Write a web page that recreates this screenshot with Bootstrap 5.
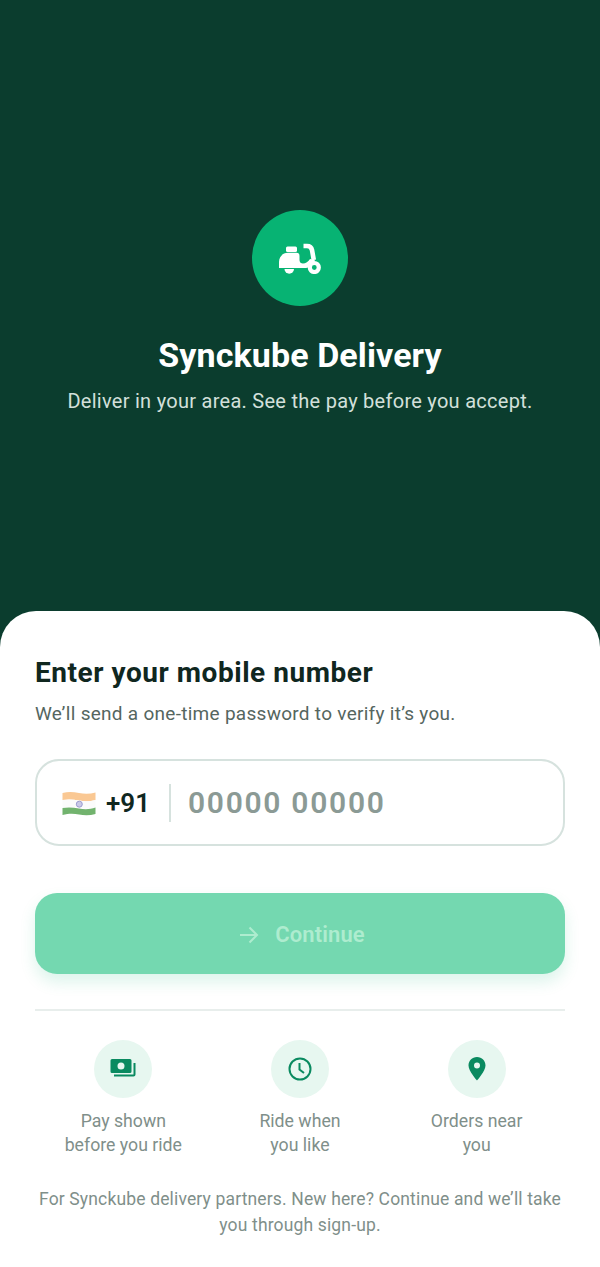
<!DOCTYPE html>
<html lang="en">
  <head>
    <meta charset="UTF-8" />
    <meta name="viewport" content="width=device-width, initial-scale=1.0" />
    <title>Synckube Delivery</title>
    <link href="https://cdn.jsdelivr.net/npm/bootstrap@5.3.0/dist/css/bootstrap.min.css" rel="stylesheet" />
    <style>
      html, body { height: 100%; }
      body { font-family: Roboto, "Liberation Sans", sans-serif; background: #0b3d2e; overflow: hidden; }
      .hero-panel { height: 611px; padding-top: 210px; background: #0b3d2e; }
      .logo-disc { width: 96px; height: 96px; background: #07b373; }
      .hero-title { font-size: 34px; line-height: 40px; font-weight: 700; color: #fff; margin: 29px 0 0; letter-spacing: 0.1px; }
      .hero-sub { font-size: 20px; line-height: 28px; color: #d3e0db; margin: 12px 0 0; letter-spacing: 0.27px; }
      .sheet { height: 656px; background: #fff; border-radius: 36px 36px 0 0; padding: 44px 35px 0; }
      .sheet-title { font-size: 28px; line-height: 36px; font-weight: 700; color: #10271f; margin: 0; letter-spacing: 0.54px; }
      .sheet-sub { font-size: 19px; line-height: 26px; color: #55665f; margin: 10px 0 0; letter-spacing: 0.28px; }
      .phone-box { height: 87px; margin-top: 32px; border: 2px solid #d6e2de; border-radius: 24px; padding: 0 24px; }
      .dial-code { font-size: 26px; font-weight: 600; color: #10271f; margin-left: 9px; padding-top: 1px; }
      .phone-split { width: 2px; height: 38px; background: #d6e2de; margin: 0 17px 0 19px; }
      .phone-hint { font-size: 30px; font-weight: 600; color: #8b9a95; letter-spacing: 1.7px; }
      .go-btn { height: 81px; margin-top: 47px; padding: 2px 0 0 4px; border: 0; border-radius: 22px; background: #74d8b0; color: #aeeccf; font-size: 22px; font-weight: 600; letter-spacing: 0.1px; box-shadow: 0 8px 16px rgba(7, 179, 115, 0.14); }
      .go-btn:disabled { background: #74d8b0; color: #aeeccf; opacity: 1; }
      .sheet-rule { height: 2px; margin-top: 35px; background: #e8eeec; }
      .perk-row { display: grid; grid-template-columns: repeat(3, 1fr); margin-top: 29px; }
      .perk-disc { width: 58px; height: 58px; background: #e7f7f0; }
      .perk-text { font-size: 17.7px; line-height: 24px; color: #7f8f8a; margin-top: 11px; }
      .sheet-note { font-size: 17.5px; line-height: 26px; color: #7f8f8a; margin-top: 29px; letter-spacing: 0.15px; }
    </style>
  </head>
  <body>
    <div class="hero-panel text-center">
      <div class="logo-disc rounded-circle d-flex align-items-center justify-content-center mx-auto">
        <svg width="44" height="32" viewBox="0 -1 44 32" fill="#fff">
          <rect x="8" y="3.500" width="11" height="5.500" rx="1.500" />
          <path d="M1 25V19C1 13.500 5 9.800 10 9.800H18.500C20.500 9.800 21.500 11 21.500 13V17C21.500 19.500 23 20.500 25 20.500 27.500 20.500 30.500 18.500 32 16L37 17C35 21 31.500 25 28 25Z" />
          <path d="M6.500 26h9.500a4.750 4.750 0 0 1-9.500 0z" />
          <path d="M25.500 3h3.500c3 0 4.500 1.500 5 4l1.800 10" fill="none" stroke="#fff" stroke-width="4.600" />
          <circle cx="36.300" cy="24.500" r="4.500" fill="none" stroke="#fff" stroke-width="4.200" />
        </svg>
      </div>
      <h1 class="hero-title">Synckube Delivery</h1>
      <p class="hero-sub">Deliver in your area. See the pay before you accept.</p>
    </div>
    <div class="sheet">
      <h2 class="sheet-title">Enter your mobile number</h2>
      <p class="sheet-sub">We’ll send a one-time password to verify it’s you.</p>
      <div class="phone-box d-flex align-items-center">
        <svg width="36" height="28" viewBox="0 0 36 28">
          <path d="M1.500 4c6-1.500 11-1 16.500 0s11 1 16.500-.5v7.500c-5.500 1.500-11 1.500-16.500.5S7.500 10 1.500 11z" fill="#fac893" />
          <path d="M1.500 11c6-1 11-.5 16.500.5s11 1 16.500-.5v7.500c-5.500 1.500-11 1.500-16.500.5s-10.500-1-16.500 0z" fill="#fbfbfb" />
          <path d="M1.500 19c6-1 11-.5 16.500.5s11 1 16.500-1V25c-5.500 1.500-11 1.500-16.500.5S7.500 24.500 1.500 26z" fill="#72b36e" />
          <circle cx="18.300" cy="15.200" r="3" fill="#c9c9e6" stroke="#9c9cd0" stroke-width="1" />
        </svg>
        <span class="dial-code">+91</span>
        <span class="phone-split"></span>
        <span class="phone-hint">00000 00000</span>
      </div>
      <button class="go-btn btn w-100 d-flex align-items-center justify-content-center gap-3" disabled>
        <svg width="20" height="20" viewBox="0 0 20 20" fill="none" stroke="#aeeccf" stroke-width="2">
          <path d="M1 10h17M10.500 2.500 18 10l-7.500 7.500" />
        </svg>
        Continue
      </button>
      <div class="sheet-rule"></div>
      <div class="perk-row text-center">
        <div>
          <div class="perk-disc rounded-circle d-flex align-items-center justify-content-center mx-auto">
            <svg width="28" height="24" viewBox="0 0 28 24">
              <path fill-rule="evenodd" fill="#0a8a60" d="M3 2h18a1.500 1.500 0 0 1 1.500 1.500v11A1.500 1.500 0 0 1 21 16H3a1.500 1.500 0 0 1-1.500-1.500v-11A1.500 1.500 0 0 1 3 2zm9 3.500a3.500 3.500 0 1 0 0 7 3.500 3.500 0 0 0 0-7z" />
              <path d="M25.500 6v11.500a1 1 0 0 1-1 1H5" fill="none" stroke="#0a8a60" stroke-width="2" />
            </svg>
          </div>
          <div class="perk-text">Pay shown<br />before you ride</div>
        </div>
        <div>
          <div class="perk-disc rounded-circle d-flex align-items-center justify-content-center mx-auto">
            <svg width="24" height="24" viewBox="0 0 24 24" fill="none" stroke="#0a8a60" stroke-width="2">
              <circle cx="12" cy="12" r="10.500" />
              <path d="M11.500 6v6.500l4.500 3.500" />
            </svg>
          </div>
          <div class="perk-text">Ride when<br />you like</div>
        </div>
        <div>
          <div class="perk-disc rounded-circle d-flex align-items-center justify-content-center mx-auto">
            <svg width="18" height="24" viewBox="0 0 18 24">
              <path fill-rule="evenodd" fill="#0a8a60" d="M9 0c5 0 8.500 3.700 8.500 8.500C17.500 14 9 23.500 9 23.500S.5 14 .5 8.500C.5 3.700 4 0 9 0zm0 5.500a3 3 0 1 0 0 6 3 3 0 0 0 0-6z" />
            </svg>
          </div>
          <div class="perk-text">Orders near<br />you</div>
        </div>
      </div>
      <p class="sheet-note text-center mb-0">For Synckube delivery partners. New here? Continue and we’ll take you through sign-up.</p>
    </div>
  </body>
</html>
